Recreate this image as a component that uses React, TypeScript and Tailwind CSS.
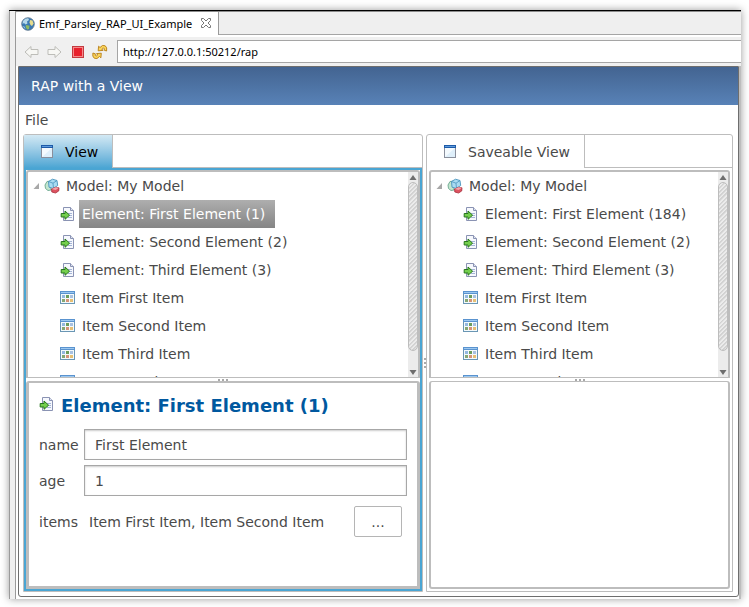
import { useState, type ReactNode } from "react";

const UI_FONT = "font-['DejaVu_Sans',Verdana,sans-serif]";
const CHROME_FONT = "font-['Noto_Sans','Open_Sans',sans-serif]";

function GlobeIcon() {
  return (
    <svg width="14" height="14" viewBox="0 0 14 14" aria-hidden="true">
      <circle cx="7" cy="7" r="6.3" fill="#3b79b3" stroke="#5b7288" strokeWidth="0.8" />
      <path d="M2 4 Q4 1 7.5 1.4 L8 3 L6 4.5 L6.5 6.5 L4.5 7.5 L3 6 L1.5 7 Z" fill="#b4d8ea" />
      <path d="M9 3 L11.5 3.5 L12.5 6.5 L11 9 L9.5 8 L8.5 5.5 Z" fill="#e7dc8c" />
      <path d="M5 8 L8.5 8.8 L8 12 L6.2 12.6 L4.6 10 Z" fill="#8fba62" />
      <path d="M2.5 9 L4 11.5" stroke="#8dc6ea" strokeWidth="1" />
    </svg>
  );
}

function CloseIcon() {
  return (
    <svg width="12" height="11" viewBox="0 0 12 11" aria-hidden="true">
      <path
        d="M1.5 0.5 H3.5 L6 3 L8.5 0.5 H10.5 V2.5 L8 5 L10.5 7.5 V9.5 H8.5 L6 7 L3.5 9.5 H1.5 V7.5 L4 5 L1.5 2.5 Z"
        fill="#fff"
        stroke="#777"
      />
    </svg>
  );
}

function ArrowIcon({ flip = false }: { flip?: boolean }) {
  return (
    <svg width="15" height="14" viewBox="0 0 15 14" aria-hidden="true" className={flip ? "-scale-x-100" : ""}>
      <path d="M1 7 L7 1.5 V4.5 H14 V9.5 H7 V12.5 Z" fill="#f7f7f4" stroke="#bdbdb8" strokeLinejoin="round" />
    </svg>
  );
}

function StopIcon() {
  return (
    <svg width="12" height="12" viewBox="0 0 12 12" aria-hidden="true">
      <rect x="0.5" y="0.5" width="11" height="11" fill="#f58a8a" stroke="#c33a40" />
      <rect x="2" y="2" width="8" height="8" fill="#e8202c" />
    </svg>
  );
}

function RefreshIcon() {
  return (
    <svg width="16" height="16" viewBox="0 0 16 16" aria-hidden="true">
      <g fill="#fbd65c" stroke="#b57d16" strokeWidth="0.9" strokeLinejoin="round">
        <path d="M6.2 6.8 L6.6 2.2 L8 3.5 Q10.5 0.3 13.2 1.8 Q15.4 3.4 14.6 7 L12.2 6.2 Q12.6 4.3 11.6 4 Q10.7 3.9 9.8 5 L11 6.4 Z" />
        <path d="M9.3 9.2 L8.9 13.8 L7.5 12.5 Q5 15.7 2.3 14.2 Q0.1 12.6 0.9 9 L3.3 9.8 Q2.9 11.7 3.9 12 Q4.8 12.1 5.7 11 L4.5 9.6 Z" />
      </g>
    </svg>
  );
}

function WindowIcon() {
  return (
    <svg width="12" height="13" viewBox="0 0 12 13" aria-hidden="true" className="shrink-0">
      <rect x="0.5" y="0.5" width="11" height="12" fill="#f4fafe" stroke="#8a8f9c" />
      <rect x="0" y="0" width="12" height="3" fill="#1d5aa8" />
      <rect x="1" y="1" width="10" height="1" fill="#5f9bdc" />
      <path d="M1 12 L11 3 V12 Z" fill="#dfeffa" />
    </svg>
  );
}

function ModelIcon() {
  return (
    <svg width="16" height="16" viewBox="0 0 16 16" aria-hidden="true" className="shrink-0">
      <path d="M1 7 L3 3.5 L7 3 V12 L4 12.5 L1.5 10.5 Z" fill="#c3e6cf" stroke="#6aa78d" strokeWidth="0.9" />
      <path d="M4.5 3.5 L8.5 1.2 L13 2.5 L13.7 7.5 L9.5 10.5 L5 9.2 Z" fill="#a9dcf2" stroke="#4a94bd" strokeWidth="0.9" />
      <path d="M4.5 3.5 L9 5.2 L13 2.5 M9 5.2 L9.5 10.5" fill="none" stroke="#4a94bd" strokeWidth="0.8" />
      <path d="M7.5 11 L11.5 9.3 L15 9.8 L14.7 13 L11.5 15 L7.8 14 Z" fill="#dd5260" stroke="#a52c3a" strokeWidth="0.8" />
      <path d="M7.5 11 L11.6 12 L15 9.8 L11.5 9.3 Z" fill="#f5a5aa" />
    </svg>
  );
}

function ElementIcon() {
  return (
    <svg width="16" height="16" viewBox="0 0 16 16" aria-hidden="true" className="shrink-0">
      <path d="M3.5 1.5 H10.5 L13.5 4.5 V14.5 H3.5 Z" fill="#f6f8fd" stroke="#8a93b3" />
      <path d="M10.5 1.5 V4.5 H13.5" fill="#dfe4f2" stroke="#8a93b3" />
      <path d="M8 7.5 H12 M9 9.5 H12 M8 11.5 H12" stroke="#a5b5d6" />
      <path d="M1.2 7.5 H5 V5 L9.6 9.2 L5 13.3 V11 H1.2 Z" fill="#74cf4d" stroke="#26751c" strokeWidth="1" strokeLinejoin="round" />
    </svg>
  );
}

function ItemIcon() {
  return (
    <svg width="16" height="16" viewBox="0 0 16 16" aria-hidden="true" className="shrink-0">
      <rect x="0.5" y="1.5" width="14" height="12" fill="#f4fafc" stroke="#6a96b4" />
      <rect x="0" y="1" width="15" height="3" fill="#5a93cf" />
      <rect x="1" y="2" width="13" height="1" fill="#9cc8f0" />
      <rect x="2" y="5" width="3" height="3" fill="#94b8e0" />
      <rect x="6" y="5" width="3" height="3" fill="#6b9d5c" />
      <rect x="10" y="5" width="3" height="3" fill="#a9c1e0" />
      <rect x="2" y="9" width="3" height="3" fill="#86a775" />
      <rect x="6" y="9" width="3" height="3" fill="#d69478" />
      <rect x="10" y="9" width="3" height="3" fill="#e6bf74" />
    </svg>
  );
}

function ScrollBar() {
  return (
    <div className="flex w-[10px] shrink-0 flex-col items-center bg-[#ececec]">
      <svg width="10" height="10" viewBox="0 0 10 10" aria-hidden="true">
        <path d="M5 3 L8.5 8 H1.5 Z" fill="#6e6e6e" />
      </svg>
      <div className="w-full flex-1 rounded-full border border-[#bdbdbd] bg-[repeating-linear-gradient(135deg,#d2d2d2_0px,#d2d2d2_1px,#ececec_2px,#ececec_3px)]" />
      <div className="h-[15px]" />
      <svg width="10" height="11" viewBox="0 0 10 11" aria-hidden="true">
        <path d="M1.5 4 H8.5 L5 9 Z" fill="#6e6e6e" />
      </svg>
    </div>
  );
}

function Grip({ vertical = false }: { vertical?: boolean }) {
  return (
    <div className={`flex items-center justify-center gap-[2px] ${vertical ? "flex-col" : "h-[3px]"}`}>
      <span className="size-[2px] bg-[#a9a9a9]" />
      <span className="size-[2px] bg-[#a9a9a9]" />
      <span className="size-[2px] bg-[#a9a9a9]" />
    </div>
  );
}

function Tree({
  labels,
  selected,
  onSelect,
}: {
  labels: string[];
  selected: number | null;
  onSelect: (index: number) => void;
}) {
  return (
    <div className="flex h-[208px] rounded-t-[3px] border-2 border-b border-[#bdbdbd] bg-white">
      <div role="tree" className="min-w-0 flex-1 overflow-hidden">
        <div role="treeitem" aria-expanded="true" className="flex h-7 items-center pl-[5px]">
          <svg width="11" height="8" viewBox="0 0 11 8" aria-hidden="true" className="shrink-0">
            <path d="M6 1 V7 H0.5 Z" fill="#a8a8a8" />
          </svg>
          <ModelIcon />
          <span className="ml-[3px] px-[3px] whitespace-nowrap">Model: My Model</span>
        </div>
        {labels.map((label, i) => (
          <div key={label} role="treeitem" aria-selected={selected === i} className="flex h-7 items-center pl-8">
            {label.startsWith("Element") ? <ElementIcon /> : <ItemIcon />}
            <button
              type="button"
              onClick={() => onSelect(i)}
              className={`ml-[3px] h-7 pl-[3px] whitespace-nowrap ${
                selected === i ? "bg-linear-to-b from-[#aeaeae] to-[#858585] pr-[10px] text-white" : ""
              }`}
            >
              {label}
            </button>
          </div>
        ))}
      </div>
      <ScrollBar />
    </div>
  );
}

function Folder({ title, active = false, children }: { title: string; active?: boolean; children: ReactNode }) {
  return (
    <section className="flex min-w-0 flex-col rounded-t-[3px] border border-[#bdbdbd]">
      <div role="tablist" className="flex h-[33px] shrink-0">
        <button
          type="button"
          role="tab"
          aria-selected={active}
          className={`flex items-center gap-3 border-r border-[#bdbdbd] pr-[14px] pl-[17px] whitespace-nowrap ${
            active ? "bg-linear-to-b from-[#d3e9f4] to-[#4aa5d3] text-black" : ""
          }`}
        >
          <WindowIcon />
          {title}
        </button>
        <div className="flex-1 border-b border-[#bdbdbd]" />
      </div>
      <div className={`flex flex-1 flex-col border-2 ${active ? "border-[#4aa5d3]" : "border-white"}`}>
        {children}
      </div>
    </section>
  );
}

const ITEMS = ["Item First Item", "Item Second Item", "Item Third Item", "Item Fourth Item"];

export default function App() {
  const [selected, setSelected] = useState<number | null>(0);
  const [otherSelected, setOtherSelected] = useState<number | null>(null);

  return (
    <div className={`flex min-h-screen bg-white pt-[10px] pr-2 pb-2 pl-[9px] text-sm text-[#4a4a4a] ${UI_FONT}`}>
      <div className="flex min-w-0 flex-1 border-t border-black bg-[#f0f0f0] shadow-[0_0_8px_rgba(0,0,0,0.4)]">
        <div className="w-[7px] shrink-0 border-x border-[#9a9a9a] bg-[#efefef]" />
        <div className="flex min-w-0 flex-1 flex-col">
          <div className={`flex h-6 border-t border-[#8c8c8c] text-[11px] text-black ${CHROME_FONT}`}>
            <div className="flex items-center rounded-tl-[3px] border-r border-[#9a9a9a] bg-white pr-[6px] pl-[5px]">
              <GlobeIcon />
              <span className="ml-1 whitespace-nowrap">Emf_Parsley_RAP_UI_Example</span>
              <button type="button" aria-label="Close tab" className="ml-2">
                <CloseIcon />
              </button>
            </div>
            <div className="flex-1 border-b border-[#a5a5a5] bg-[#efefef]" />
          </div>
          <div className="flex h-[31px] items-center border-t-2 border-white bg-[#f0f0f0] pl-2">
            <button type="button" aria-label="Back">
              <ArrowIcon />
            </button>
            <button type="button" aria-label="Forward" className="ml-2">
              <ArrowIcon flip />
            </button>
            <button type="button" aria-label="Stop" className="ml-[10px]">
              <StopIcon />
            </button>
            <button type="button" aria-label="Refresh" className="ml-2">
              <RefreshIcon />
            </button>
            <input
              aria-label="Address"
              defaultValue="http://127.0.0.1:50212/rap"
              className={`ml-[9px] h-[23px] min-w-0 flex-1 border border-r-0 border-[#a5a5a5] bg-white px-[5px] text-[11px] text-black outline-none ${CHROME_FONT}`}
            />
          </div>
          <div className="flex flex-1 border-r-2 border-[#bdbdbd] bg-white pb-[2px] pl-[2px]">
            <div className="flex min-w-0 flex-1 flex-col rounded-b-[3px] border border-[#6e6e6e] bg-white">
              <header className="flex h-[38px] items-center bg-linear-to-b from-[#436491] to-[#5882b7] pl-3 text-white">
                RAP with a View
              </header>
              <nav className="flex h-[29px] items-center pl-[6px]">
                <button type="button">File</button>
              </nav>
              <main className="grid flex-1 grid-cols-[400fr_3px_307fr] pr-[5px] pb-1 pl-1">
                <Folder title="View" active>
                  <Tree
                    labels={[
                      "Element: First Element (1)",
                      "Element: Second Element (2)",
                      "Element: Third Element (3)",
                      ...ITEMS,
                    ]}
                    selected={selected}
                    onSelect={setSelected}
                  />
                  <div className="bg-white">
                    <Grip />
                  </div>
                  <form className="flex-1 rounded-t-[3px] border-[3px] border-t-2 border-[#bdbdbd] bg-white px-[10px]">
                    <div className="flex h-[46px] items-center">
                      <span className="-mt-1">
                        <ElementIcon />
                      </span>
                      <h2 className="ml-[6px] text-lg font-bold whitespace-nowrap text-[#00589f]">
                        Element: First Element (1)
                      </h2>
                    </div>
                    <div className="grid grid-cols-[45px_1fr] items-center gap-y-[5px]">
                      <label htmlFor="name">name</label>
                      <input
                        id="name"
                        defaultValue="First Element"
                        className="h-[31px] min-w-0 border border-[#a7a7a7] px-[10px] shadow-[inset_0_1px_2px_#cccccc] outline-none"
                      />
                      <label htmlFor="age">age</label>
                      <input
                        id="age"
                        defaultValue="1"
                        className="h-[31px] min-w-0 border border-[#a7a7a7] px-[10px] shadow-[inset_0_1px_2px_#cccccc] outline-none"
                      />
                      <label htmlFor="items">items</label>
                      <div className="flex items-center justify-between p-[5px]">
                        <span className="whitespace-nowrap">Item First Item, Item Second Item</span>
                        <button
                          id="items"
                          type="button"
                          className="h-[31px] w-12 shrink-0 rounded-[2px] border border-[#b5b5b5] bg-white"
                        >
                          ...
                        </button>
                      </div>
                    </div>
                  </form>
                </Folder>
                <div className="flex items-center justify-center">
                  <Grip vertical />
                </div>
                <Folder title="Saveable View">
                  <Tree
                    labels={[
                      "Element: First Element (184)",
                      "Element: Second Element (2)",
                      "Element: Third Element (3)",
                      ...ITEMS,
                    ]}
                    selected={otherSelected}
                    onSelect={setOtherSelected}
                  />
                  <Grip />
                  <div className="flex-1 rounded-[3px] border-2 border-t border-[#bdbdbd]" />
                </Folder>
              </main>
            </div>
          </div>
        </div>
      </div>
    </div>
  );
}
